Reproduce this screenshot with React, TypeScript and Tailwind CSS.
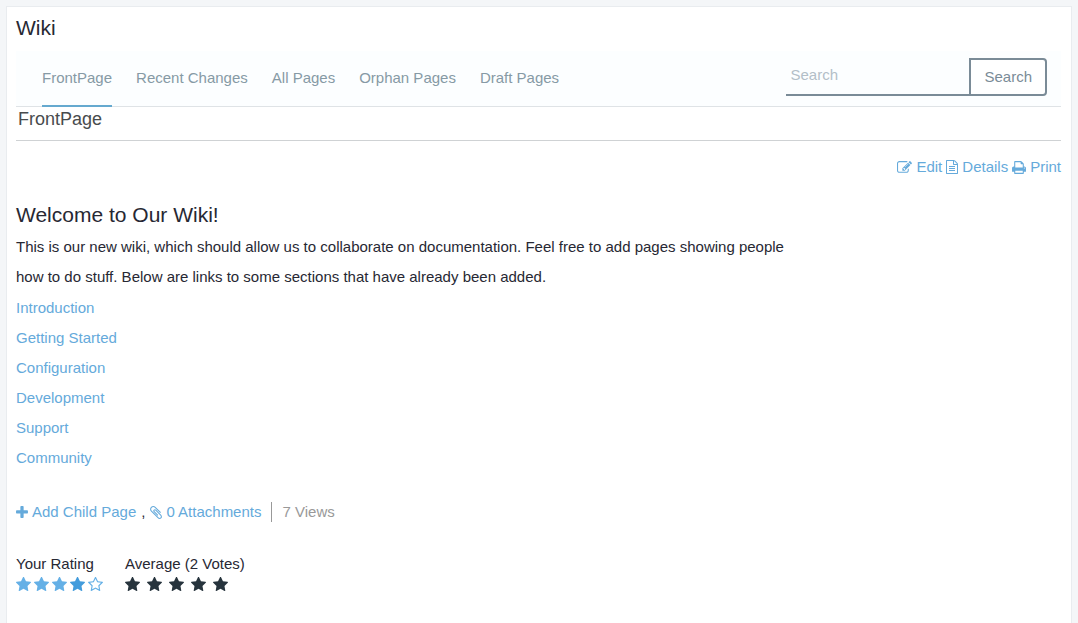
import React from "react";

type IconProps = { box: string; className: string; d: string };

const Icon = ({ box, className, d }: IconProps) => (
  <svg viewBox={box} className={className} fill="currentColor" aria-hidden="true">
    <path d={d} />
  </svg>
);

const EDIT =
  "M888 1184l116-116-152-152-116 116v56h96v96h56zm440-720q-16-16-33 1l-350 350q-17 17-1 33t33-1l350-350q17-17 1-33zm80 594v190q0 119-84.5 203.5t-203.5 84.5h-832q-119 0-203.5-84.5t-84.5-203.5v-832q0-119 84.5-203.5t203.5-84.5h832q63 0 117 25 15 7 18 23 3 17-9 29l-49 49q-14 14-32 8-23-6-45-6h-832q-66 0-113 47t-47 113v832q0 66 47 113t113 47h832q66 0 113-47t47-113v-126q0-13 9-22l64-64q15-15 35-7t20 29zm-96-738l288 288-672 672h-288v-288zm444 132l-92 92-288-288 92-92q28-28 68-28t68 28l152 152q28 28 28 68t-28 68z";
const FILE =
  "M1596 380q28 28 48 76t20 88v1152q0 40-28 68t-68 28h-1344q-40 0-68-28t-28-68v-1600q0-40 28-68t68-28h896q40 0 88 20t76 48zm-444-244v376h376q-10-29-22-41l-313-313q-12-12-41-22zm384 1528v-1024h-416q-40 0-68-28t-28-68v-416h-768v1536h1280zm-1024-864q0-14 9-23t23-9h704q14 0 23 9t9 23v64q0 14-9 23t-23 9h-704q-14 0-23-9t-9-23v-64zm736 224q14 0 23 9t9 23v64q0 14-9 23t-23 9h-704q-14 0-23-9t-9-23v-64q0-14 9-23t23-9h704zm0 256q14 0 23 9t9 23v64q0 14-9 23t-23 9h-704q-14 0-23-9t-9-23v-64q0-14 9-23t23-9h704z";
const PRINT =
  "M448 1536h896v-256h-896v256zm0-640h896v-384h-160q-40 0-68-28t-28-68v-160h-640v640zm1152 64q0-26-19-45t-45-19-45 19-19 45 19 45 45 19 45-19 19-45zm128 0v416q0 13-9.5 22.5t-22.5 9.5h-224v160q0 40-28 68t-68 28h-960q-40 0-68-28t-28-68v-160h-224q-13 0-22.5-9.5t-9.5-22.5v-416q0-79 56.5-135.5t135.5-56.5h64v-544q0-40 28-68t68-28h672q40 0 88 20t76 48l152 152q28 28 48 76t20 88v256h64q79 0 135.5 56.5t56.5 135.5z";
const PLUS =
  "M1600 736v192q0 40-28 68t-68 28h-416v416q0 40-28 68t-68 28h-192q-40 0-68-28t-28-68v-416h-416q-40 0-68-28t-28-68v-192q0-40 28-68t68-28h416v-416q0-40 28-68t68-28h192q40 0 68 28t28 68v416h416q40 0 68 28t28 68z";
const CLIP =
  "M1596 1385q0 117-79 196t-196 79q-135 0-235-100l-777-776q-113-115-113-271 0-159 110-270t269-111q158 0 273 113l605 606q10 10 10 22 0 16-30.5 46.5t-46.5 30.5q-13 0-23-10l-606-607q-79-77-181-77-106 0-179 75t-73 181q0 105 76 181l776 777q63 63 145 63 64 0 106-42t42-106q0-82-63-145l-581-581q-26-24-60-24-29 0-48 19t-19 48q0 32 25 59l410 410q10 10 10 22 0 16-31 47t-47 31q-12 0-22-10l-410-410q-63-61-63-149 0-82 57-139t139-57q88 0 149 63l581 581q100 98 100 235z";
const STAR =
  "M1728 647q0 22-26 48l-363 354 86 500q1 7 1 20 0 21-10.5 35.5t-30.5 14.5q-19 0-40-12l-449-236-449 236q-22 12-40 12-21 0-31.5-14.5t-10.5-35.5q0-6 2-20l86-500-364-354q-25-27-25-48 0-37 56-46l502-73 225-455q19-41 49-41t49 41l225 455 502 73q56 9 56 46z";
const STAR_OPEN =
  "M1201 1004l306-297-422-62-189-382-189 382-422 62 306 297-73 421 378-199 377 199zm527-357q0 22-26 48l-363 354 86 500q1 7 1 20 0 50-41 50-19 0-40-12l-449-236-449 236q-22 12-40 12-21 0-31.5-14.5t-10.5-35.5q0-6 2-20l86-500-364-354q-25-27-25-48 0-37 56-46l502-73 225-455q19-41 49-41t49 41l225 455 502 73q56 9 56 46z";

const tabs = ["FrontPage", "Recent Changes", "All Pages", "Orphan Pages", "Draft Pages"];
const sections = ["Introduction", "Getting Started", "Configuration", "Development", "Support", "Community"];
const stars = [1, 2, 3, 4, 5];

export default function App() {
  return (
    <div className="min-h-screen bg-[#f4f6f8] px-1.5 pt-1.5 font-['Liberation_Sans',Arial,sans-serif] text-[15px] text-[#272833]">
      <main className="min-h-[calc(100vh-6px)] border border-b-0 border-[#e9ecef] bg-white pt-2 pr-2.5 pl-[9px]">
        <h1 className="text-[21px] leading-[26px]">Wiki</h1>

        <div className="mt-2.5 flex items-start justify-between border-b border-[#dfe3e6] bg-[#fcfeff] pr-3.5 pl-[26px]">
          <nav aria-label="Wiki" className="flex gap-6 text-[#869aa5]">
            {tabs.map((tab, i) => (
              <a
                key={tab}
                href="#"
                className={
                  i === 0
                    ? "-mb-px border-b-2 border-[#65a9cf] pt-[17px] pb-[17px] leading-5"
                    : "-mb-px border-b-2 border-transparent pt-[17px] pb-[17px] leading-5"
                }
              >
                {tab}
              </a>
            ))}
          </nav>
          <form className="mt-[7px] flex h-[38px]" onSubmit={(e) => e.preventDefault()}>
            <input
              type="search"
              aria-label="Search"
              placeholder="Search"
              className="w-[183px] border-b-2 border-[#7a8b97] px-1 pb-0.5 outline-none placeholder:text-[#b3bfc8]"
            />
            <button type="submit" className="rounded-r border-2 border-[#7a8b97] bg-white px-[13px] text-[#7a8b97]">
              Search
            </button>
          </form>
        </div>

        <h2 className="border-b border-[#cfd2d4] pt-px pb-2.5 pl-0.5 text-[18px] leading-[22px] text-[#484b4d]">FrontPage</h2>

        <div className="mt-4 flex justify-end gap-1 leading-5 text-[#65aadb]">
          <a href="#" className="flex items-center gap-1">
            <Icon box="0 0 1792 1792" className="size-[15px]" d={EDIT} />
            Edit
          </a>
          <a href="#" className="flex items-center gap-1">
            <Icon box="128 0 1536 1792" className="h-3.5 w-3" d={FILE} />
            Details
          </a>
          <a href="#" className="flex items-center gap-1">
            <Icon box="64 0 1664 1792" className="h-[15px] w-3.5" d={PRINT} />
            Print
          </a>
        </div>

        <article>
          <h2 className="mt-[22px] text-[21px] leading-8">Welcome to Our Wiki!</h2>
          <p className="mt-px max-w-[790px] leading-[30px]">
            This is our new wiki, which should allow us to collaborate on documentation. Feel free to add pages showing
            people how to do stuff. Below are links to some sections that have already been added.
          </p>
          <ul className="mt-px leading-[30px] text-[#65aadb]">
            {sections.map((name) => (
              <li key={name}>
                <a href="#">{name}</a>
              </li>
            ))}
          </ul>
        </article>

        <div className="mt-[29px] flex items-center leading-5 text-[#999999]">
          <a href="#" className="flex items-center gap-1 text-[#65aadb]">
            <Icon box="192 128 1408 1536" className="h-[13px] w-3" d={PLUS} />
            Add Child Page
          </a>
          <span className="px-[5px] text-[#272833]">,</span>
          <a href="#" className="flex items-center gap-1 text-[#65aadb]">
            <Icon box="192 128 1408 1536" className="h-[13px] w-3" d={CLIP} />
            0 Attachments
          </a>
          <span className="ml-2.5 border-l border-[#999999] pl-2.5">7 Views</span>
        </div>

        <div className="mt-8 flex gap-[22px] leading-5">
          <section>
            <h3>Your Rating</h3>
            <div className="flex gap-[3px] pt-[3px] text-[#65b0e6]">
              {stars.map((n) => (
                <button
                  key={n}
                  type="button"
                  aria-label={`Rate ${n} of 5`}
                  className={n === 4 ? "text-[#439cdc]" : "text-[#65b0e6]"}
                >
                  <Icon box="64 64 1664 1664" className="size-[15px]" d={n === 5 ? STAR_OPEN : STAR} />
                </button>
              ))}
            </div>
          </section>
          <section>
            <h3>Average (2 Votes)</h3>
            <div className="flex gap-[7px] pt-[3px]">
              {stars.map((n) => (
                <Icon key={n} box="64 64 1664 1664" className="size-[15px] text-[#27343d]" d={STAR} />
              ))}
            </div>
          </section>
        </div>
      </main>
    </div>
  );
}
